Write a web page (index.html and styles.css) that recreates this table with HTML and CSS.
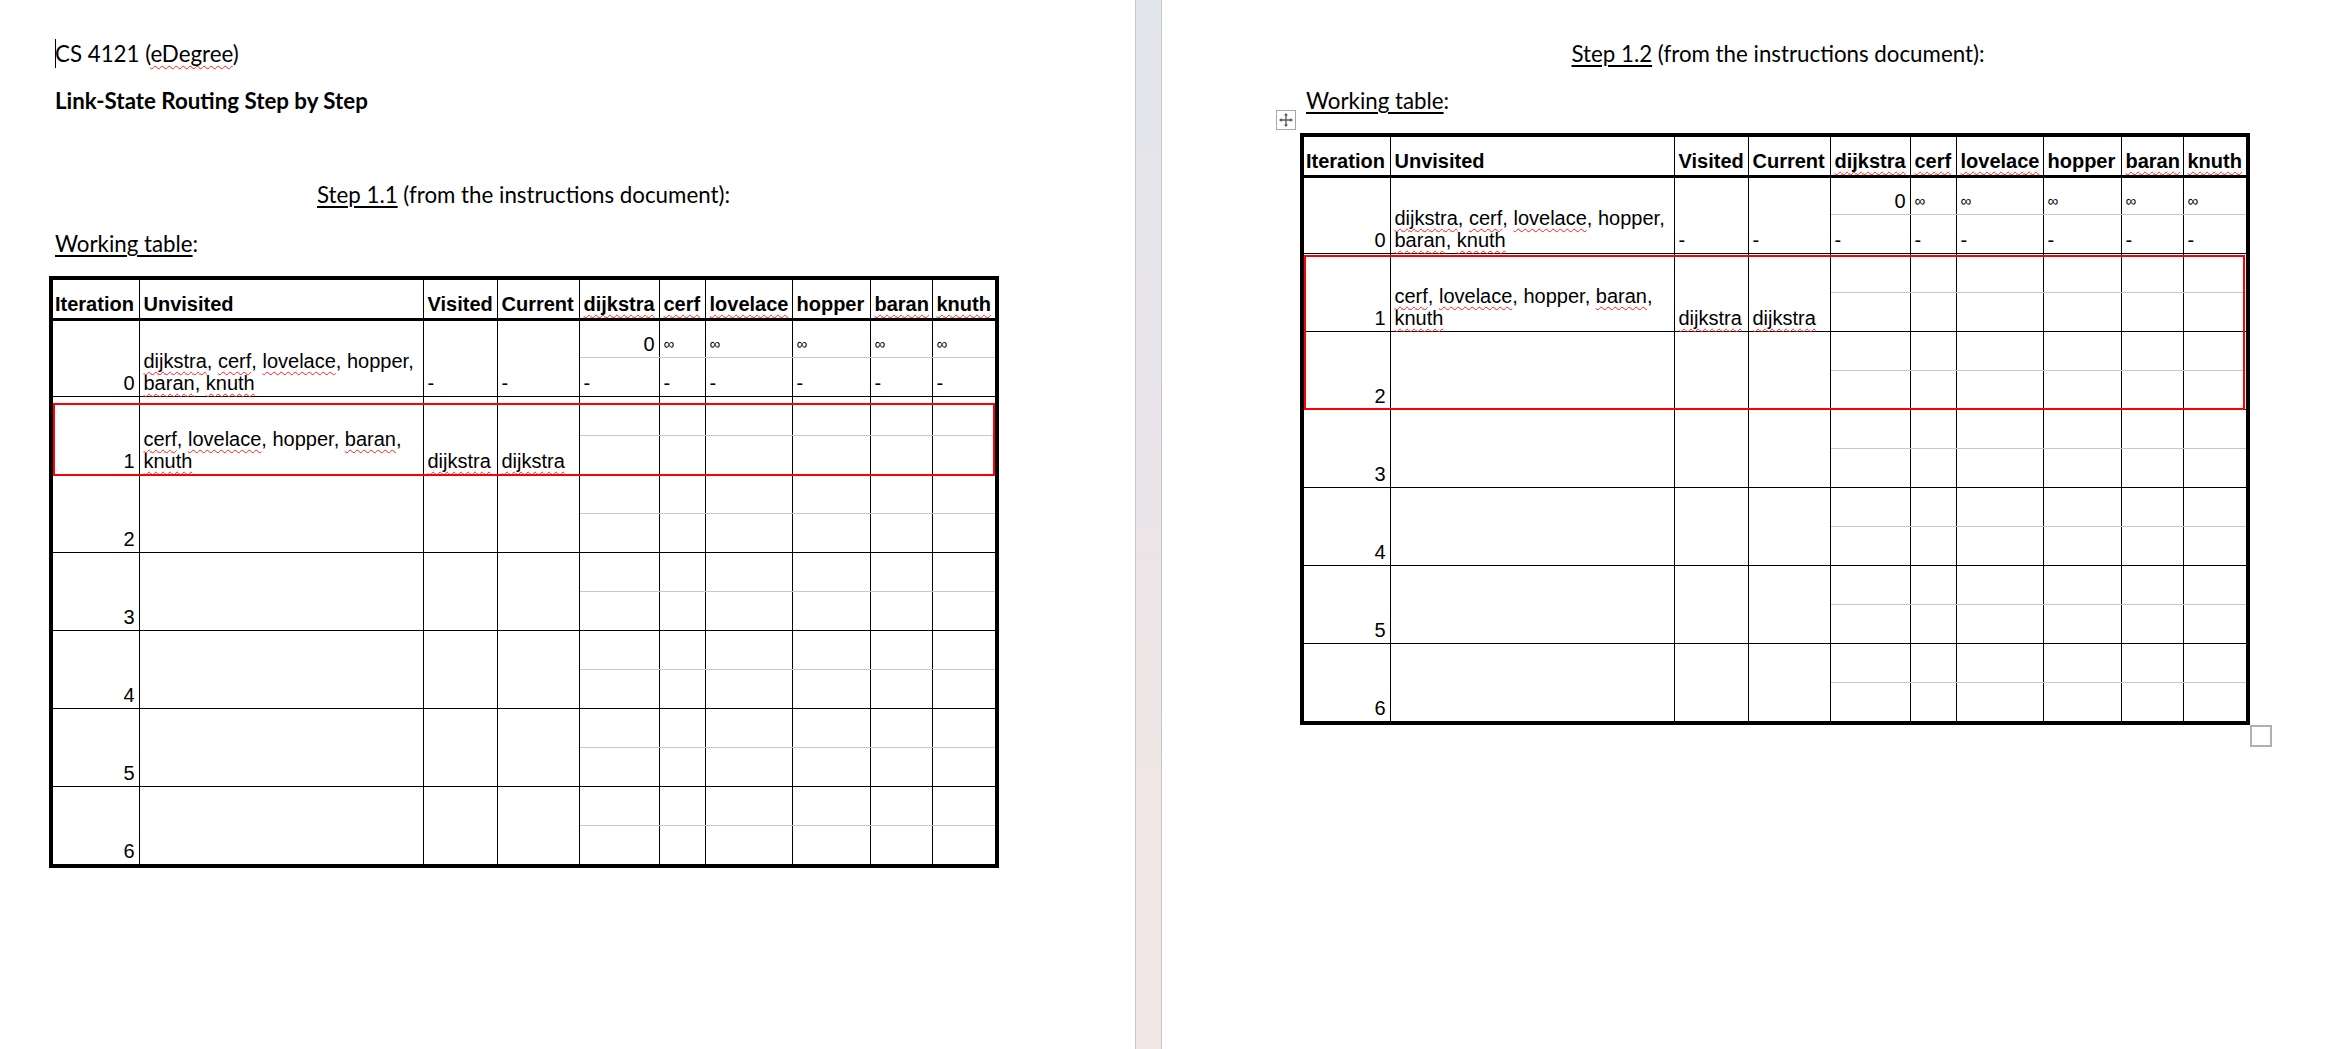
FILE: index.html
```html
<!DOCTYPE html>
<html lang="en">
<head>
<meta charset="utf-8">
<title>Link-State Routing Step by Step</title>
<link rel="stylesheet" href="styles.css">
</head>
<body>
<div class="desk">
  <section class="page page-left">
    <p class="para"><span class="caret"></span>CS 4121 (<span class="sp">eDegree</span>)</p>
    <p class="para bold">Link-State Routing Step by Step</p>
    <p class="para blank"></p>
    <p class="para center step-left"><span class="ul">Step 1.1</span> (from the instructions document):</p>
    <p class="para before-table"><span class="ul">Working table</span>:</p>
    <div class="tbl-wrap">
      <table class="grid">
        <colgroup>
          <col class="c-it"><col class="c-un"><col class="c-vi"><col class="c-cu"><col class="c-dj"><col class="c-ce"><col class="c-lo"><col class="c-ho"><col class="c-ba"><col class="c-kn">
        </colgroup>
        <tr class="head">
          <th class="first">Iteration</th><th>Unvisited</th><th>Visited</th><th>Current</th><th><span class="sp">dijkstra</span></th><th><span class="sp">cerf</span></th><th><span class="sp">lovelace</span></th><th>hopper</th><th><span class="sp">baran</span></th><th><span class="sp">knuth</span></th>
        </tr>
        <tr class="top first-row">
          <td rowspan="2" class="r">0</td>
          <td rowspan="2" class="wrap"><span class="sp">dijkstra</span>, <span class="sp">cerf</span>, <span class="sp">lovelace</span>, hopper, <span class="sp">baran</span>, <span class="sp">knuth</span></td>
          <td rowspan="2">-</td><td rowspan="2">-</td>
          <td class="d r">0</td><td class="d"><span class="inf">∞</span></td><td class="d"><span class="inf">∞</span></td><td class="d"><span class="inf">∞</span></td><td class="d"><span class="inf">∞</span></td><td class="d"><span class="inf">∞</span></td>
        </tr>
        <tr class="bot"><td>-</td><td>-</td><td>-</td><td>-</td><td>-</td><td>-</td></tr>
        <tr class="top">
          <td rowspan="2" class="r">1</td>
          <td rowspan="2" class="wrap"><span class="sp">cerf</span>, <span class="sp">lovelace</span>, hopper, <span class="sp">baran</span>, <span class="sp">knuth</span></td>
          <td rowspan="2"><span class="sp">dijkstra</span></td><td rowspan="2"><span class="sp">dijkstra</span></td>
          <td class="d"></td><td class="d"></td><td class="d"></td><td class="d"></td><td class="d"></td><td class="d"></td>
        </tr>
        <tr class="bot"><td></td><td></td><td></td><td></td><td></td><td></td></tr>
        <tr class="top">
          <td rowspan="2" class="r">2</td><td rowspan="2"></td><td rowspan="2"></td><td rowspan="2"></td>
          <td class="d"></td><td class="d"></td><td class="d"></td><td class="d"></td><td class="d"></td><td class="d"></td>
        </tr>
        <tr class="bot"><td></td><td></td><td></td><td></td><td></td><td></td></tr>
        <tr class="top">
          <td rowspan="2" class="r">3</td><td rowspan="2"></td><td rowspan="2"></td><td rowspan="2"></td>
          <td class="d"></td><td class="d"></td><td class="d"></td><td class="d"></td><td class="d"></td><td class="d"></td>
        </tr>
        <tr class="bot"><td></td><td></td><td></td><td></td><td></td><td></td></tr>
        <tr class="top">
          <td rowspan="2" class="r">4</td><td rowspan="2"></td><td rowspan="2"></td><td rowspan="2"></td>
          <td class="d"></td><td class="d"></td><td class="d"></td><td class="d"></td><td class="d"></td><td class="d"></td>
        </tr>
        <tr class="bot"><td></td><td></td><td></td><td></td><td></td><td></td></tr>
        <tr class="top">
          <td rowspan="2" class="r">5</td><td rowspan="2"></td><td rowspan="2"></td><td rowspan="2"></td>
          <td class="d"></td><td class="d"></td><td class="d"></td><td class="d"></td><td class="d"></td><td class="d"></td>
        </tr>
        <tr class="bot"><td></td><td></td><td></td><td></td><td></td><td></td></tr>
        <tr class="top">
          <td rowspan="2" class="r">6</td><td rowspan="2"></td><td rowspan="2"></td><td rowspan="2"></td>
          <td class="d"></td><td class="d"></td><td class="d"></td><td class="d"></td><td class="d"></td><td class="d"></td>
        </tr>
        <tr class="bot last"><td></td><td></td><td></td><td></td><td></td><td></td></tr>
      </table>
      <div class="redbox red-left"></div>
    </div>
  </section>

  <div class="gutter"></div>

  <section class="page page-right">
    <p class="para center"><span class="ul">Step 1.2</span> (from the instructions document):</p>
    <p class="para before-table"><span class="ul">Working table</span>:</p>
    <div class="tbl-wrap">
      <div class="move-handle">
        <svg width="16" height="16" viewBox="0 0 16 16" aria-hidden="true">
          <path d="M8 2.5V13.5M2.5 8H13.5" stroke="#555" stroke-width="1.3" fill="none"/>
          <path d="M8 1L6 3.6H10Z M8 15L6 12.4H10Z M1 8L3.6 6V10Z M15 8L12.4 6V10Z" fill="#555"/>
        </svg>
      </div>
      <table class="grid">
        <colgroup>
          <col class="c-it"><col class="c-un"><col class="c-vi"><col class="c-cu"><col class="c-dj"><col class="c-ce"><col class="c-lo"><col class="c-ho"><col class="c-ba"><col class="c-kn">
        </colgroup>
        <tr class="head">
          <th class="first">Iteration</th><th>Unvisited</th><th>Visited</th><th>Current</th><th><span class="sp">dijkstra</span></th><th><span class="sp">cerf</span></th><th><span class="sp">lovelace</span></th><th>hopper</th><th><span class="sp">baran</span></th><th><span class="sp">knuth</span></th>
        </tr>
        <tr class="top first-row">
          <td rowspan="2" class="r">0</td>
          <td rowspan="2" class="wrap"><span class="sp">dijkstra</span>, <span class="sp">cerf</span>, <span class="sp">lovelace</span>, hopper, <span class="sp">baran</span>, <span class="sp">knuth</span></td>
          <td rowspan="2">-</td><td rowspan="2">-</td>
          <td class="d r">0</td><td class="d"><span class="inf">∞</span></td><td class="d"><span class="inf">∞</span></td><td class="d"><span class="inf">∞</span></td><td class="d"><span class="inf">∞</span></td><td class="d"><span class="inf">∞</span></td>
        </tr>
        <tr class="bot"><td>-</td><td>-</td><td>-</td><td>-</td><td>-</td><td>-</td></tr>
        <tr class="top">
          <td rowspan="2" class="r">1</td>
          <td rowspan="2" class="wrap"><span class="sp">cerf</span>, <span class="sp">lovelace</span>, hopper, <span class="sp">baran</span>, <span class="sp">knuth</span></td>
          <td rowspan="2"><span class="sp">dijkstra</span></td><td rowspan="2"><span class="sp">dijkstra</span></td>
          <td class="d"></td><td class="d"></td><td class="d"></td><td class="d"></td><td class="d"></td><td class="d"></td>
        </tr>
        <tr class="bot"><td></td><td></td><td></td><td></td><td></td><td></td></tr>
        <tr class="top">
          <td rowspan="2" class="r">2</td><td rowspan="2"></td><td rowspan="2"></td><td rowspan="2"></td>
          <td class="d"></td><td class="d"></td><td class="d"></td><td class="d"></td><td class="d"></td><td class="d"></td>
        </tr>
        <tr class="bot"><td></td><td></td><td></td><td></td><td></td><td></td></tr>
        <tr class="top">
          <td rowspan="2" class="r">3</td><td rowspan="2"></td><td rowspan="2"></td><td rowspan="2"></td>
          <td class="d"></td><td class="d"></td><td class="d"></td><td class="d"></td><td class="d"></td><td class="d"></td>
        </tr>
        <tr class="bot"><td></td><td></td><td></td><td></td><td></td><td></td></tr>
        <tr class="top">
          <td rowspan="2" class="r">4</td><td rowspan="2"></td><td rowspan="2"></td><td rowspan="2"></td>
          <td class="d"></td><td class="d"></td><td class="d"></td><td class="d"></td><td class="d"></td><td class="d"></td>
        </tr>
        <tr class="bot"><td></td><td></td><td></td><td></td><td></td><td></td></tr>
        <tr class="top">
          <td rowspan="2" class="r">5</td><td rowspan="2"></td><td rowspan="2"></td><td rowspan="2"></td>
          <td class="d"></td><td class="d"></td><td class="d"></td><td class="d"></td><td class="d"></td><td class="d"></td>
        </tr>
        <tr class="bot"><td></td><td></td><td></td><td></td><td></td><td></td></tr>
        <tr class="top">
          <td rowspan="2" class="r">6</td><td rowspan="2"></td><td rowspan="2"></td><td rowspan="2"></td>
          <td class="d"></td><td class="d"></td><td class="d"></td><td class="d"></td><td class="d"></td><td class="d"></td>
        </tr>
        <tr class="bot last"><td></td><td></td><td></td><td></td><td></td><td></td></tr>
      </table>
      <div class="redbox red-right"></div>
      <div class="resize-handle"></div>
    </div>
  </section>
</div>
</body>
</html>
```

FILE: styles.css
```css
* { box-sizing: border-box; }

html, body {
  margin: 0;
  padding: 0;
  background: #ffffff;
}

body {
  width: 2345px;
  height: 1049px;
  overflow: hidden;
  color: #000;
  font-family: "Lato", "Noto Sans", sans-serif;
}

.desk {
  display: flex;
  height: 1049px;
}

.page {
  background: #ffffff;
  padding-top: 39px;
}

.page-left {
  width: 1135px;
  padding-left: 55px;
  padding-right: 143px;
}

.page-right {
  flex: 1;
  padding-left: 144px;
  padding-right: 102px;
}

.gutter {
  width: 27px;
  flex: none;
  border-left: 1px solid #c6c6c6;
  border-right: 1px solid #c6c6c6;
  background: linear-gradient(180deg, #e2e5ea 0%, #e9e5ea 40%, #efe6e5 75%, #efe6e5 100%);
}

.para {
  margin: 0 0 18px;
  font-size: 22.3px;
  line-height: 29px;
  white-space: nowrap;
}

.bold { font-weight: 700; }
.center { text-align: center; }
.blank { height: 29px; }
.step-left { margin-bottom: 20px; }
.before-table { margin-bottom: 18px; }

.caret {
  display: inline-block;
  width: 0;
  height: 29px;
  margin-right: -1px;
  border-left: 1px solid #000;
  vertical-align: top;
}

.ul {
  text-decoration: underline;
  text-decoration-thickness: 2px;
  text-underline-offset: 3px;
}

.sp {
  text-decoration: underline wavy #ff1a1a;
  text-decoration-thickness: 1px;
  text-underline-offset: 3px;
  text-decoration-skip-ink: none;
}

/* ---------- table ---------- */
.tbl-wrap {
  position: relative;
  width: 950px;
  margin-left: -6px;
}

.grid {
  border-collapse: collapse;
  table-layout: fixed;
  width: 950px;
  border: 4px solid #000;
  font-family: "Liberation Sans", Arial, sans-serif;
  font-size: 20px;
  line-height: 22px;
}

.c-it { width: 88px; }
.c-un { width: 284px; }
.c-vi { width: 74px; }
.c-cu { width: 82px; }
.c-dj { width: 80px; }
.c-ce { width: 46px; }
.c-lo { width: 87px; }
.c-ho { width: 78px; }
.c-ba { width: 62px; }
.c-kn { width: 65px; }

.grid th,
.grid td {
  border: 1px solid #000;
  padding: 0 4px 2px;
  vertical-align: bottom;
  text-align: left;
  white-space: nowrap;
  overflow: visible;
}

.grid th {
  font-weight: 700;
  border-bottom: 3px solid #000;
  padding-bottom: 3px;
}

.grid th.first { padding-left: 2px; }

.grid tr.head { height: 41px; }
.grid tr.top { height: 39px; }
.grid tr.bot { height: 39px; }
.grid tr.first-row { height: 38px; }
.grid tr.last { height: 41px; }

.grid td.wrap { white-space: normal; }
.grid .r { text-align: right; }

.grid tr.top td.d { border-bottom: 1px solid #c8c8c8; }
.grid tr.bot td { border-top: 1px solid #c8c8c8; }

.inf {
  font-size: 15px;
}

.redbox {
  position: absolute;
  border: 2px solid #ff0000;
  pointer-events: none;
}

.red-left {
  left: 4px;
  top: 127px;
  width: 942px;
  height: 73px;
}

.red-right {
  left: 4px;
  top: 122px;
  width: 941px;
  height: 155px;
}

.move-handle {
  position: absolute;
  left: -24px;
  top: -23px;
  width: 20px;
  height: 20px;
  border: 1px solid #a8a8a8;
  background: #fff;
  display: flex;
  align-items: center;
  justify-content: center;
}

.resize-handle {
  position: absolute;
  left: 100%;
  top: 100%;
  width: 22px;
  height: 22px;
  border: 2px solid #b0b0b0;
  background: #fff;
}
```
